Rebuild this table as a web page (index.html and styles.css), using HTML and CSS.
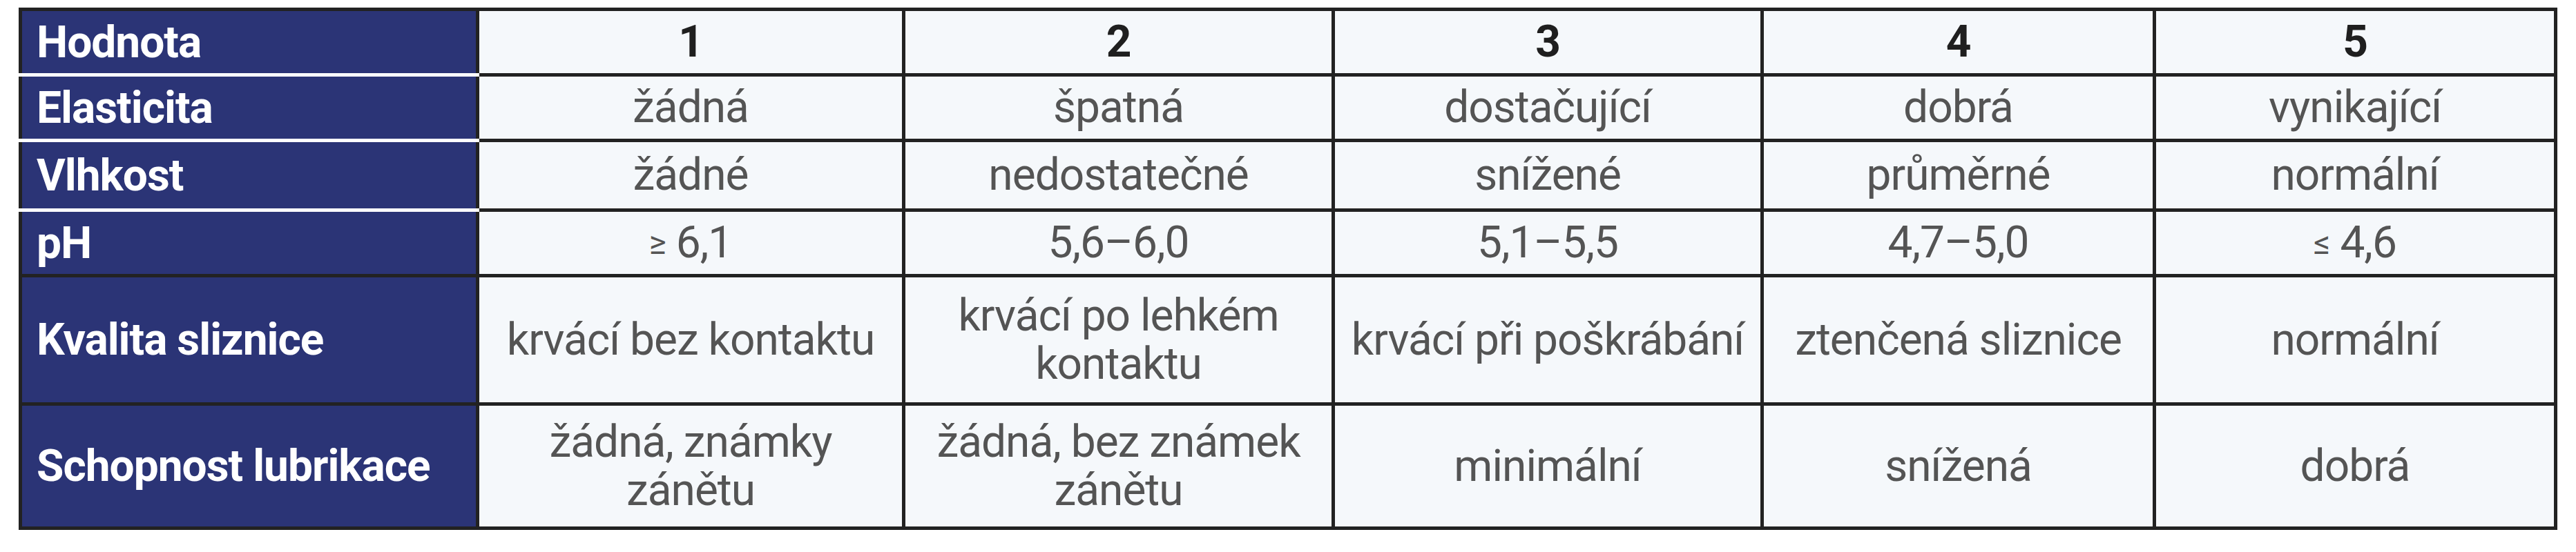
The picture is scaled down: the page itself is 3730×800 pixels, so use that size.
FILE: index.html
```html
<!DOCTYPE html>
<html lang="cs">
<head>
<meta charset="utf-8">
<title>Hodnota</title>
<link rel="stylesheet" href="styles.css">
</head>
<body>
<div class="table">
  <div class="label sep">Hodnota</div>
  <div class="cell head">1</div>
  <div class="cell head">2</div>
  <div class="cell head">3</div>
  <div class="cell head">4</div>
  <div class="cell head">5</div>

  <div class="label sep">Elasticita</div>
  <div class="cell">žádná</div>
  <div class="cell">špatná</div>
  <div class="cell">dostačující</div>
  <div class="cell">dobrá</div>
  <div class="cell">vynikající</div>

  <div class="label sep">Vlhkost</div>
  <div class="cell">žádné</div>
  <div class="cell">nedostatečné</div>
  <div class="cell">snížené</div>
  <div class="cell">průměrné</div>
  <div class="cell">normální</div>

  <div class="label">pH</div>
  <div class="cell"><span class="sym">≥</span>&nbsp;6,1</div>
  <div class="cell">5,6–6,0</div>
  <div class="cell">5,1–5,5</div>
  <div class="cell">4,7–5,0</div>
  <div class="cell"><span class="sym">≤</span>&nbsp;4,6</div>

  <div class="label">Kvalita sliznice</div>
  <div class="cell">krvácí bez kontaktu</div>
  <div class="cell">krvácí po lehkém<br>kontaktu</div>
  <div class="cell">krvácí při poškrábání</div>
  <div class="cell">ztenčená sliznice</div>
  <div class="cell">normální</div>

  <div class="label">Schopnost lubrikace</div>
  <div class="cell">žádná, známky<br>zánětu</div>
  <div class="cell">žádná, bez známek<br>zánětu</div>
  <div class="cell">minimální</div>
  <div class="cell">snížená</div>
  <div class="cell">dobrá</div>
</div>
</body>
</html>
```
FILE: styles.css
```css
html, body {
  margin: 0;
  padding: 0;
  background: #ffffff;
}

.table {
  display: grid;
  box-sizing: border-box;
  width: 3676px;
  margin: 11px 0 0 27px;
  padding: 5px;
  gap: 5px;
  background: #222222;
  grid-template-columns: 657px 612px 617px 616px 563px 576px;
  grid-template-rows: 90px 90px 96px 90px 181px 175px;
  font-family: Roboto, "Liberation Sans", sans-serif;
  font-size: 64px;
}

.label {
  position: relative;
  display: flex;
  align-items: center;
  padding-left: 21px;
  background: #2b3476;
  color: #ffffff;
  font-weight: 700;
  letter-spacing: -1px;
}

.label.sep::after {
  content: "";
  position: absolute;
  left: -5px;
  right: -5px;
  bottom: -5px;
  height: 5px;
  background: #ffffff;
}

.cell {
  display: flex;
  align-items: center;
  justify-content: center;
  text-align: center;
  background: #f5f8fb;
  color: #545454;
  line-height: 1.08;
  letter-spacing: -1px;
}

.head {
  color: #1f1f1f;
  font-weight: 700;
}

.sym {
  font-size: 0.75em;
}
```
